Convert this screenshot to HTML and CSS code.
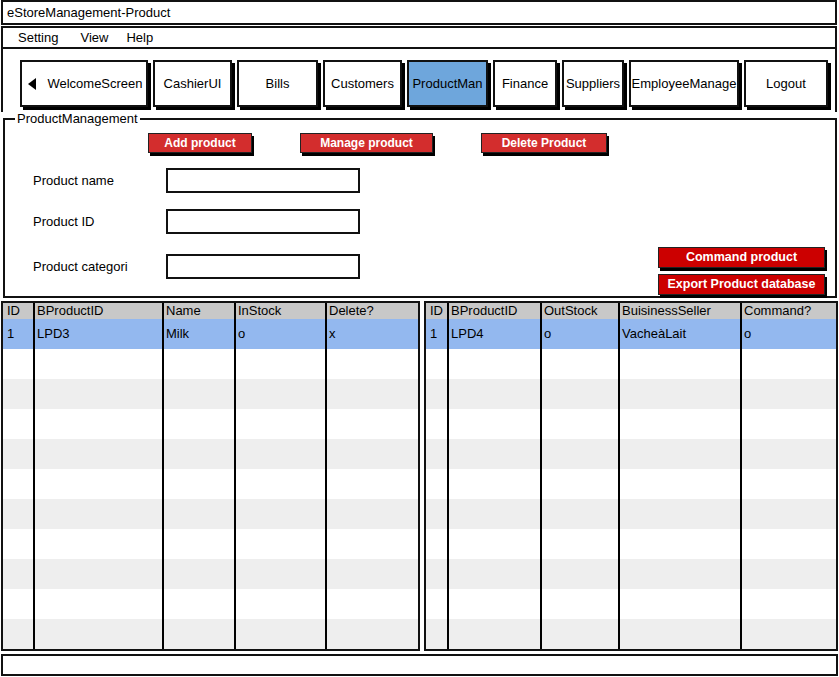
FILE: index.html
```html
<!DOCTYPE html>
<html>
<head>
<meta charset="utf-8">
<link rel="stylesheet" href="styles.css">
</head>
<body>
<div class="titlebar">eStoreManagement-Product</div>
<div class="menubar">
  <span class="menu-item">Setting</span>
  <span class="menu-item">View</span>
  <span class="menu-item menu-help">Help</span>
</div>
<div class="navwrap">
  <div class="nav">
    <div class="navbtn nb-welcome"><svg class="arrow" width="8" height="12" viewBox="0 0 8 12"><polygon points="8,0 8,12 0,6" fill="#000"/></svg><span>WelcomeScreen</span></div>
    <div class="navbtn">CashierUI</div>
    <div class="navbtn">Bills</div>
    <div class="navbtn">Customers</div>
    <div class="navbtn active">ProductMan</div>
    <div class="navbtn">Finance</div>
    <div class="navbtn">Suppliers</div>
    <div class="navbtn">EmployeeManage</div>
    <div class="navbtn">Logout</div>
  </div>
</div>
<fieldset class="group">
  <legend class="group-title">ProductManagement</legend>
  <div class="group-inner">
    <div class="actions">
      <div class="redbtn rb-add">Add product</div>
      <div class="redbtn rb-manage">Manage product</div>
      <div class="redbtn rb-delete">Delete Product</div>
    </div>
    <div class="group-body">
      <div class="form">
        <div class="form-row"><span class="form-label">Product name</span><div class="input"></div></div>
        <div class="form-row"><span class="form-label">Product ID</span><div class="input"></div></div>
        <div class="form-row last"><span class="form-label">Product categori</span><div class="input"></div></div>
      </div>
      <div class="side">
        <div class="redbtn strong rb-side">Command product</div>
        <div class="redbtn strong rb-side">Export Product database</div>
      </div>
    </div>
  </div>
</fieldset>
<div class="tables">
  <div class="tablebox left">
    <table class="grid">
      <colgroup><col class="lc1"><col class="lc2"><col class="lc3"><col class="lc4"><col class="lc5"></colgroup>
      <tr class="head"><th>ID</th><th>BProductID</th><th>Name</th><th>InStock</th><th>Delete?</th></tr>
      <tr class="sel"><td>1</td><td>LPD3</td><td>Milk</td><td>o</td><td>x</td></tr>
      <tr class="w"><td></td><td></td><td></td><td></td><td></td></tr>
      <tr class="g"><td></td><td></td><td></td><td></td><td></td></tr>
      <tr class="w"><td></td><td></td><td></td><td></td><td></td></tr>
      <tr class="g"><td></td><td></td><td></td><td></td><td></td></tr>
      <tr class="w"><td></td><td></td><td></td><td></td><td></td></tr>
      <tr class="g"><td></td><td></td><td></td><td></td><td></td></tr>
      <tr class="w"><td></td><td></td><td></td><td></td><td></td></tr>
      <tr class="g"><td></td><td></td><td></td><td></td><td></td></tr>
      <tr class="w"><td></td><td></td><td></td><td></td><td></td></tr>
      <tr class="g"><td></td><td></td><td></td><td></td><td></td></tr>
    </table>
  </div>
  <div class="tablebox right">
    <table class="grid">
      <colgroup><col class="rc1"><col class="rc2"><col class="rc3"><col class="rc4"><col class="rc5"></colgroup>
      <tr class="head"><th>ID</th><th>BProductID</th><th>OutStock</th><th>BuisinessSeller</th><th>Command?</th></tr>
      <tr class="sel"><td>1</td><td>LPD4</td><td>o</td><td>VacheàLait</td><td>o</td></tr>
      <tr class="w"><td></td><td></td><td></td><td></td><td></td></tr>
      <tr class="g"><td></td><td></td><td></td><td></td><td></td></tr>
      <tr class="w"><td></td><td></td><td></td><td></td><td></td></tr>
      <tr class="g"><td></td><td></td><td></td><td></td><td></td></tr>
      <tr class="w"><td></td><td></td><td></td><td></td><td></td></tr>
      <tr class="g"><td></td><td></td><td></td><td></td><td></td></tr>
      <tr class="w"><td></td><td></td><td></td><td></td><td></td></tr>
      <tr class="g"><td></td><td></td><td></td><td></td><td></td></tr>
      <tr class="w"><td></td><td></td><td></td><td></td><td></td></tr>
      <tr class="g"><td></td><td></td><td></td><td></td><td></td></tr>
    </table>
  </div>
</div>
<div class="statusbar"></div>
</body>
</html>
```

FILE: styles.css
```css
* { box-sizing: border-box; }
html, body { margin: 0; padding: 0; }
body {
  width: 839px;
  height: 677px;
  overflow: hidden;
  background: #fff;
  color: #000;
  font-family: "Liberation Sans", Arial, sans-serif;
  font-size: 13px;
  display: flex;
  flex-direction: column;
}
.titlebar {
  margin-left: 1px;
  width: 836px;
  height: 25px;
  border: 2px solid #111;
  padding-left: 4px;
  line-height: 21px;
}
.menubar {
  margin-top: 1px;
  margin-left: 1px;
  width: 836px;
  height: 23px;
  border: 2px solid #111;
  display: flex;
  padding-left: 15px;
  line-height: 19px;
}
.menu-item + .menu-item { margin-left: 22px; }
.menu-item.menu-help { margin-left: 18px; }
.navwrap {
  margin-left: 1px;
  width: 836px;
  height: 63px;
  border-left: 2px solid #111;
  border-right: 2px solid #111;
  padding: 11px 0 0 17px;
}
.nav {
  display: grid;
  grid-template-columns: 128px 79px 81px 79px 81px 64px 62px 110px 84px;
  column-gap: 5px;
  height: 47px;
}
.navbtn {
  border: 2px solid #111;
  box-shadow: 3px 3px 0 #000;
  background: #fff;
  display: flex;
  align-items: center;
  justify-content: center;
  white-space: nowrap;
}
.navbtn.active { background: #6ea6dc; }
.nb-welcome { gap: 11px; padding-left: 3px; }
.arrow { display: block; flex: none; }
.group {
  margin: 0 0 0 3px;
  width: 834px;
  padding: 0;
  border: 2px solid #111;
  min-width: 0;
}
.group-title {
  margin-left: 10px;
  padding: 0 2px;
  line-height: 14px;
  font-size: 13px;
}
.group-inner { padding: 0; }
.actions {
  display: flex;
  padding-left: 143px;
  margin-top: 7px;
}
.redbtn {
  background: #d32d2d;
  color: #fff;
  font-weight: bold;
  font-size: 12px;
  border: 1px solid #222;
  box-shadow: 2px 3px 0 #000;
  height: 20px;
  line-height: 18px;
  text-align: center;
  white-space: nowrap;
}
.rb-add { width: 104px; }
.rb-manage { width: 133px; margin-left: 48px; }
.rb-delete { width: 126px; margin-left: 48px; }
.group-body {
  display: flex;
  justify-content: space-between;
  align-items: flex-end;
}
.form {
  padding: 15px 0 17px 28px;
  display: flex;
  flex-direction: column;
  gap: 16px;
}
.form-row {
  display: flex;
  align-items: center;
  height: 25px;
}
.form-row.last { margin-top: 4px; }
.form-label { width: 133px; }
.input {
  width: 194px;
  height: 25px;
  border: 2px solid #111;
  background: #fff;
}
.side {
  display: flex;
  flex-direction: column;
  gap: 6px;
  margin-right: 10px;
  margin-bottom: 1px;
}
.redbtn.strong {
  background: #cc0000;
  font-size: 12.5px;
}
.rb-side { width: 167px; height: 21px; line-height: 19px; }
.tables {
  display: flex;
  margin-top: 3px;
  margin-left: 1px;
  gap: 4px;
}
.tablebox {
  height: 350px;
  border: 2px solid #111;
  overflow: hidden;
}
.tablebox.left { width: 419px; }
.tablebox.right { width: 414px; }
.grid {
  border-collapse: separate;
  border-spacing: 0;
  table-layout: fixed;
  width: 100%;
  font-size: 13px;
}
.lc1 { width: 30px; } .lc2 { width: 129px; } .lc3 { width: 72px; } .lc4 { width: 91px; } .lc5 { width: 93px; }
.rc1 { width: 21px; } .rc2 { width: 93px; } .rc3 { width: 78px; } .rc4 { width: 122px; } .rc5 { width: 96px; }
.grid th, .grid td {
  padding: 0 0 0 2px;
  border-left: 2px solid #000;
  text-align: left;
  font-weight: normal;
  white-space: nowrap;
  overflow: hidden;
}
.grid th:first-child, .grid td:first-child { border-left: none; padding-left: 4px; }
.grid tr.head th { height: 16px; line-height: 16px; background: #c8c8c8; }
.grid td { height: 30px; line-height: 30px; }
.grid tr.sel td { background: #93b8ef; }
.grid tr.w td { background: #fff; }
.grid tr.g td { background: #eeeeee; }
.statusbar {
  margin-top: 3px;
  margin-left: 1px;
  width: 837px;
  height: 22px;
  border: 2px solid #111;
}
```
